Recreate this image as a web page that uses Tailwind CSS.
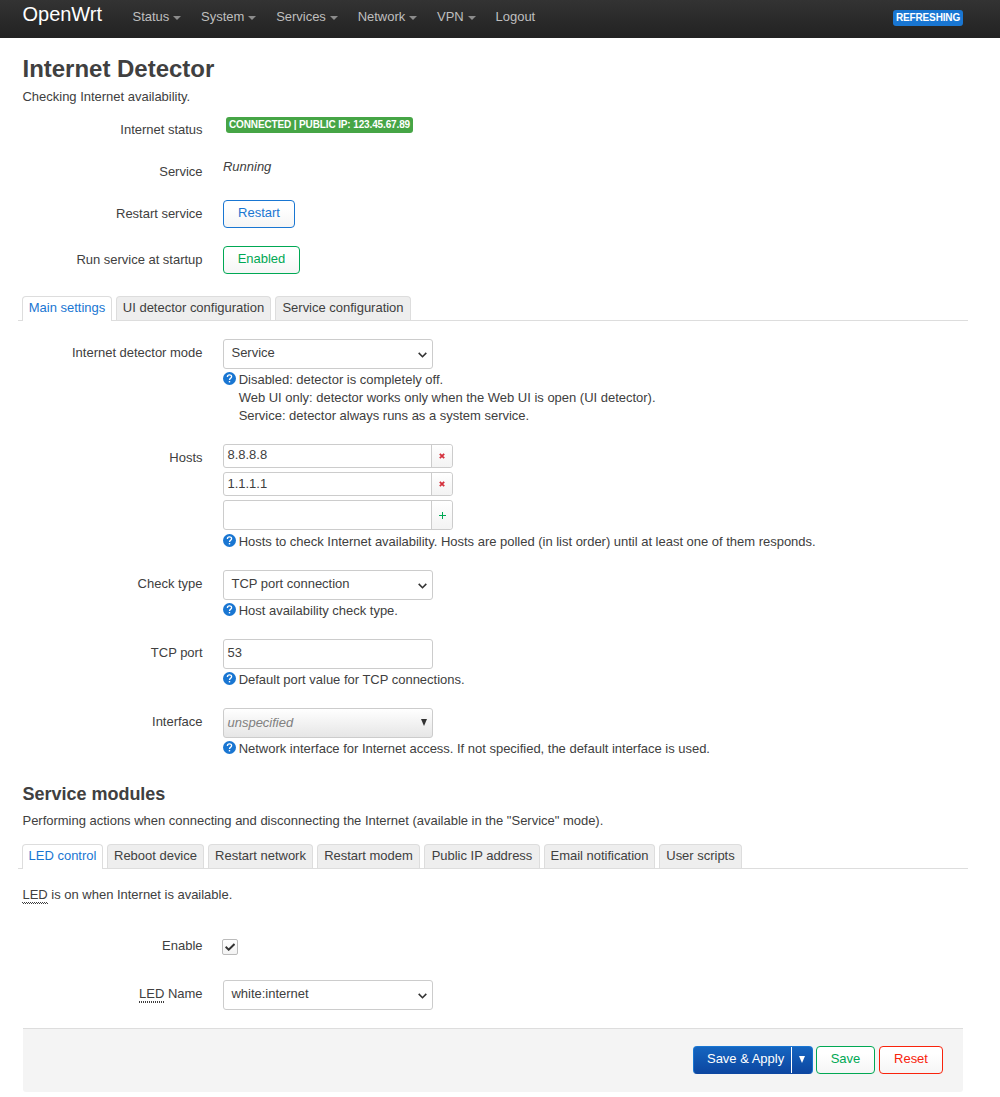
<!DOCTYPE html>
<html lang="en">
<head>
<meta charset="utf-8">
<title>OpenWrt - Internet Detector</title>
<script src="https://cdn.jsdelivr.net/npm/@tailwindcss/browser@4"></script>
</head>
<body class="h-[1097px] overflow-hidden bg-white font-['Liberation_Sans',Arial,sans-serif] text-[13px] leading-[18px] tracking-[-0.015px] text-[#404040]">
<svg class="hidden">
  <symbol id="help" viewBox="0 0 13 13"><circle cx="6.5" cy="6.5" r="6.5" fill="#1976d2"/><path d="M4.4 4.9C4.4 2.2 8.6 2.2 8.6 4.7C8.6 6.2 6.5 6.1 6.5 8" fill="none" stroke="#fff" stroke-width="1.3"/><rect x="5.8" y="9" width="1.4" height="1.4" fill="#fff"/></symbol>
  <symbol id="chevron" viewBox="0 0 9 6"><path d="M.7 .9L4.5 4.7L8.3 .9" fill="none" stroke="#333" stroke-width="1.6"/></symbol>
</svg>
<header class="flex h-[38px] items-start bg-linear-to-b from-[#333] to-[#222] pl-[22.5px] pr-[37px] text-[#bfbfbf]">
  <a class="mt-[4px] w-[110px] text-[20px] leading-[20px] text-white">OpenWrt</a>
  <nav class="mt-[8px] flex flex-1 gap-[19.8px]">
    <a class="flex items-center gap-[4px]">Status <i class="mt-[2px] border-x-4 border-t-4 border-x-transparent border-t-[#8c8c8c]"></i></a>
    <a class="flex items-center gap-[4px]">System <i class="mt-[2px] border-x-4 border-t-4 border-x-transparent border-t-[#8c8c8c]"></i></a>
    <a class="flex items-center gap-[4px]">Services <i class="mt-[2px] border-x-4 border-t-4 border-x-transparent border-t-[#8c8c8c]"></i></a>
    <a class="flex items-center gap-[4px]">Network <i class="mt-[2px] border-x-4 border-t-4 border-x-transparent border-t-[#8c8c8c]"></i></a>
    <a class="flex items-center gap-[4px]">VPN <i class="mt-[2px] border-x-4 border-t-4 border-x-transparent border-t-[#8c8c8c]"></i></a>
    <a>Logout</a>
  </nav>
  <span class="mt-[10px] h-4 w-[70px] rounded-[3px] bg-[#1976d2] text-center text-[10px] leading-[15px] font-bold tracking-[-0.15px] whitespace-nowrap text-white">REFRESHING</span>
</header>
<main class="ml-[23px] w-[940px]">
  <h2 class="-ml-[0.5px] h-[49px] pt-[13px] text-[24px] leading-[36px] font-bold">Internet Detector</h2>
  <p class="-ml-[0.5px] h-[30px] pt-px">Checking Internet availability.</p>
  <div class="flex h-[42px] gap-5">
    <label class="w-[180px] pt-[4px] pr-[0.5px] text-right">Internet status</label>
    <span class="ml-[3px] h-4 w-[187px] rounded-[3px] bg-[#46a546] text-center text-[10px] leading-[15px] font-bold tracking-[-0.13px] whitespace-nowrap text-white">CONNECTED | PUBLIC IP: 123.45.67.89</span>
  </div>
  <div class="flex h-[41px] gap-5">
    <label class="w-[180px] pt-[4px] pr-[0.5px] text-right">Service</label>
    <em class="-mt-px">Running</em>
  </div>
  <div class="flex h-[46px] gap-5">
    <label class="w-[180px] pt-[5px] pr-[0.5px] text-right">Restart service</label>
    <button class="h-7 w-[72px] rounded-[4px] border border-[#1976d2] bg-linear-to-b from-white from-25% to-[#f5f5f5] pb-[3px] text-[#1976d2]">Restart</button>
  </div>
  <div class="flex h-[50px] gap-5">
    <label class="w-[180px] pt-[5px] pr-[0.5px] text-right">Run service at startup</label>
    <button class="h-7 w-[77px] rounded-[4px] border border-[#00a854] bg-linear-to-b from-white from-25% to-[#f5f5f5] pb-[3px] text-[#00a854]">Enabled</button>
  </div>
  <div class="-mx-[5px] flex h-[25px] gap-[4px] border-b border-[#ddd] pl-[4px]">
    <a class="h-[25px] w-[90px] rounded-t-[4px] border border-b-0 border-[#ddd] bg-white pt-[2px] text-center text-[#1976d2]">Main settings</a>
    <a class="h-[24px] w-[155px] rounded-t-[4px] border border-b-0 border-[#ddd] bg-[#eee] pt-[2px] text-center">UI detector configuration</a>
    <a class="h-[24px] w-[136px] rounded-t-[4px] border border-b-0 border-[#ddd] bg-[#eee] pt-[2px] text-center">Service configuration</a>
  </div>
  <section class="pt-[18px]">
    <div class="flex h-[105px] gap-5">
      <label class="w-[180px] pt-[5px] pr-[0.5px] text-right">Internet detector mode</label>
      <div>
        <div class="flex h-[30px] w-[210px] items-center justify-between rounded-[3px] border border-[#ccc] pr-[5px] pb-[3px] pl-[7.5px]">Service<svg class="mt-[4px] h-[6px] w-[9px]"><use href="#chevron"/></svg></div>
        <div class="flex gap-[2.7px] pt-[2px]"><svg class="mt-[1px] size-[13px]"><use href="#help"/></svg><p class="whitespace-nowrap">Disabled: detector is completely off.<br>Web UI only: detector works only when the Web UI is open (UI detector).<br>Service: detector always runs as a system service.</p></div>
      </div>
    </div>
    <div class="flex h-[126px] gap-5">
      <label class="w-[180px] pt-[5px] pr-[0.5px] text-right">Hosts</label>
      <div>
        <div class="mb-[4px] flex h-[24px] w-[230px] rounded-[3px] border border-[#ccc]"><span class="w-[207px] pt-[1px] pl-[3.5px]">8.8.8.8</span><span class="flex flex-1 items-center justify-center rounded-r-[3px] border-l border-[#ccc] bg-linear-to-b from-white to-[#f3f3f3]"><svg class="size-[6px]" viewBox="0 0 6 6"><path d="M.8 .8L5.2 5.2M5.2 .8L.8 5.2" stroke="#d4303c" stroke-width="1.8"/></svg></span></div>
        <div class="mb-[4px] flex h-[24px] w-[230px] rounded-[3px] border border-[#ccc]"><span class="w-[207px] pt-[2px] pl-[3.5px]">1.1.1.1</span><span class="flex flex-1 items-center justify-center rounded-r-[3px] border-l border-[#ccc] bg-linear-to-b from-white to-[#f3f3f3]"><svg class="size-[6px]" viewBox="0 0 6 6"><path d="M.8 .8L5.2 5.2M5.2 .8L.8 5.2" stroke="#d4303c" stroke-width="1.8"/></svg></span></div>
        <div class="flex h-[30px] w-[230px] rounded-[3px] border border-[#ccc]"><span class="w-[207px]"></span><span class="flex flex-1 items-center justify-center rounded-r-[3px] border-l border-[#ccc] bg-linear-to-b from-white to-[#f3f3f3]"><svg class="mt-px size-[7px]" viewBox="0 0 7 7"><path d="M0 3.5H7M3.5 0V7" stroke="#00a854"/></svg></span></div>
        <div class="flex gap-[2.7px] pt-[3px]"><svg class="mt-[1px] size-[13px]"><use href="#help"/></svg><p class="whitespace-nowrap">Hosts to check Internet availability. Hosts are polled (in list order) until at least one of them responds.</p></div>
      </div>
    </div>
    <div class="flex h-[69px] gap-5">
      <label class="w-[180px] pt-[5px] pr-[0.5px] text-right">Check type</label>
      <div>
        <div class="flex h-[30px] w-[210px] items-center justify-between rounded-[3px] border border-[#ccc] pr-[5px] pb-[3px] pl-[7.5px]">TCP port connection<svg class="mt-[4px] h-[6px] w-[9px]"><use href="#chevron"/></svg></div>
        <div class="flex gap-[2.7px] pt-[2px]"><svg class="mt-[1px] size-[13px]"><use href="#help"/></svg><p class="whitespace-nowrap">Host availability check type.</p></div>
      </div>
    </div>
    <div class="flex h-[69px] gap-5">
      <label class="w-[180px] pt-[5px] pr-[0.5px] text-right">TCP port</label>
      <div>
        <div class="h-[30px] w-[210px] rounded-[3px] border border-[#ccc] pt-[4px] pl-[3.5px]">53</div>
        <div class="flex gap-[2.7px] pt-[2px]"><svg class="mt-[1px] size-[13px]"><use href="#help"/></svg><p class="whitespace-nowrap">Default port value for TCP connections.</p></div>
      </div>
    </div>
    <div class="flex h-[72px] gap-5">
      <label class="w-[180px] pt-[5px] pr-[0.5px] text-right">Interface</label>
      <div>
        <div class="flex h-[30px] w-[210px] items-center justify-between rounded-[3px] border border-[#ccc] bg-linear-to-b from-white to-[#e6e6e6] pr-[5px] pb-[1px] pl-[3.5px]"><em class="text-[#808080]">unspecified</em><i class="border-x-[3.5px] border-t-[7px] border-x-transparent border-t-[#333]"></i></div>
        <div class="flex gap-[2.7px] pt-[2px]"><svg class="mt-[1px] size-[13px]"><use href="#help"/></svg><p class="whitespace-nowrap">Network interface for Internet access. If not specified, the default interface is used.</p></div>
      </div>
    </div>
  </section>
  <h3 class="-ml-[0.5px] h-[31px] pt-px text-[18px] leading-[27px] font-bold">Service modules</h3>
  <p class="-ml-[0.5px] h-[33px] pt-px">Performing actions when connecting and disconnecting the Internet (available in the "Service" mode).</p>
  <div class="-mx-[5px] flex h-[25px] gap-[4px] border-b border-[#ddd] pl-[4px]">
    <a class="h-[25px] w-[81px] rounded-t-[4px] border border-b-0 border-[#ddd] bg-white pt-[2px] text-center text-[#1976d2]">LED control</a>
    <a class="h-[24px] w-[97px] rounded-t-[4px] border border-b-0 border-[#ddd] bg-[#eee] pt-[2px] text-center">Reboot device</a>
    <a class="h-[24px] w-[105px] rounded-t-[4px] border border-b-0 border-[#ddd] bg-[#eee] pt-[2px] text-center">Restart network</a>
    <a class="h-[24px] w-[103px] rounded-t-[4px] border border-b-0 border-[#ddd] bg-[#eee] pt-[2px] text-center">Restart modem</a>
    <a class="h-[24px] w-[116px] rounded-t-[4px] border border-b-0 border-[#ddd] bg-[#eee] pt-[2px] text-center">Public IP address</a>
    <a class="h-[24px] w-[111px] rounded-t-[4px] border border-b-0 border-[#ddd] bg-[#eee] pt-[2px] text-center">Email notification</a>
    <a class="h-[24px] w-[83px] rounded-t-[4px] border border-b-0 border-[#ddd] bg-[#eee] pt-[2px] text-center">User scripts</a>
  </div>
  <p class="-ml-[0.5px] h-[63px] pt-[17px]"><abbr class="inline-block h-[18px] border-b border-dotted border-[#404040] underline decoration-dotted decoration-1 underline-offset-[3px]">LED</abbr> is on when Internet is available.</p>
  <div class="flex h-[47px] gap-5">
    <label class="w-[180px] pt-[5px] pr-[0.5px] text-right">Enable</label>
    <span class="-ml-px mt-[7px] flex size-4 items-center justify-center rounded-[2px] border border-[#bbb] bg-linear-to-b from-white to-[#f3f3f3]"><svg class="h-[8px] w-[10px]" viewBox="0 0 10 8"><path d="M.6 3.8L3.7 6.7L9.5 1" fill="none" stroke="#333" stroke-width="2"/></svg></span>
  </div>
  <div class="flex h-[49px] gap-5">
    <label class="w-[180px] pt-[6px] pr-[0.5px] text-right"><abbr class="inline-block h-[18px] border-b border-dotted border-[#404040] underline decoration-dotted decoration-1 underline-offset-[3px]">LED</abbr> Name</label>
    <div class="mt-px flex h-[30px] w-[210px] items-center justify-between rounded-[3px] border border-[#ccc] pr-[5px] pb-[3px] pl-[7.5px]">white:internet<svg class="mt-[4px] h-[6px] w-[9px]"><use href="#chevron"/></svg></div>
  </div>
  <footer class="flex h-[64px] justify-end rounded-b-[3px] border-t border-[#ddd] bg-[#f4f4f4] pt-[17px] pr-5">
    <div class="mr-[3px] flex h-7 w-[120px] rounded-[4px] border border-[#1976d2] border-b-[#0d47a1] bg-linear-to-b from-[#1565c0] to-[#0d47a1] text-white">
      <span class="w-[98px] border-r border-white pt-[3px] pl-[13px]">Save &amp; Apply</span>
      <span class="flex flex-1 justify-center pt-[9px]"><i class="h-0 border-x-[3.5px] border-t-[7px] border-x-transparent border-t-white"></i></span>
    </div>
    <button class="mr-[4px] h-7 w-[59px] rounded-[4px] border border-[#00a854] bg-linear-to-b from-white from-25% to-[#f5f5f5] pb-[3px] text-[#00a854]">Save</button>
    <button class="h-7 w-[64px] rounded-[4px] border border-[#f8230c] bg-linear-to-b from-white from-25% to-[#f5f5f5] pb-[3px] text-[#f8230c]">Reset</button>
  </footer>
</main>
</body>
</html>
